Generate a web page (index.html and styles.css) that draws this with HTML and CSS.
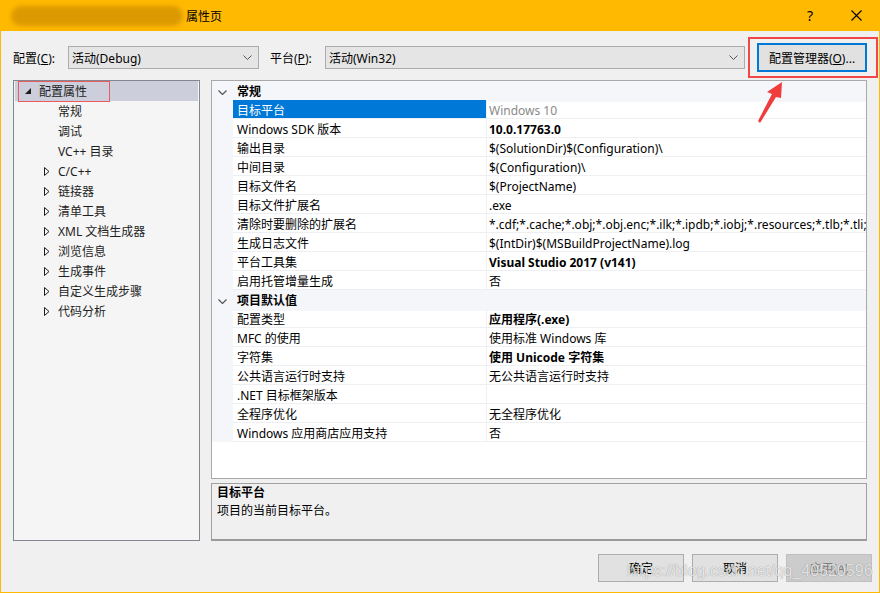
FILE: index.html
```html
<!DOCTYPE html>
<html lang="zh-CN">
<head>
<meta charset="UTF-8">
<title>属性页</title>
<link rel="stylesheet" href="styles.css">
</head>
<body>
<div class="window">
  <div class="titlebar">
    <div class="smear"></div>
    <span class="title">属性页</span>
    <span class="caption-btn help">?</span>
    <span class="caption-btn">
      <svg width="11" height="11" viewBox="0 0 11 11"><path d="M0.5 0.5 L10.5 10.5 M10.5 0.5 L0.5 10.5" stroke="#000" stroke-width="1.1"/></svg>
    </span>
  </div>

  <div class="content">
    <div class="toolbar">
      <span class="label">配置(<u>C</u>):</span>
      <div class="combo combo-config">
        <span>活动(Debug)</span>
        <svg width="9" height="5" viewBox="0 0 9 5"><polyline points="0.5,0.5 4.5,4.5 8.5,0.5" fill="none" stroke="#555" stroke-width="1"/></svg>
      </div>
      <span class="label label-platform">平台(<u>P</u>):</span>
      <div class="combo combo-platform">
        <span>活动(Win32)</span>
        <svg width="9" height="5" viewBox="0 0 9 5"><polyline points="0.5,0.5 4.5,4.5 8.5,0.5" fill="none" stroke="#555" stroke-width="1"/></svg>
      </div>
      <button class="btn-manager">配置管理器(<u>O</u>)...</button>
    </div>

    <div class="main">
      <div class="tree">
        <div class="tree-row root selected">
          <svg class="tri" width="6" height="6" viewBox="0 0 6 6"><polygon points="6,0 6,6 0,6" fill="#1e1e1e"/></svg>
          <span>配置属性</span>
          <span class="mark"></span>
        </div>
        <div class="tree-row leaf">常规</div>
        <div class="tree-row leaf">调试</div>
        <div class="tree-row leaf">VC++ 目录</div>
        <div class="tree-row node"><svg width="6" height="9" viewBox="0 0 6 9"><polygon points="0.5,0.5 5,4.5 0.5,8.5" fill="none" stroke="#1e1e1e"/></svg><span>C/C++</span></div>
        <div class="tree-row node"><svg width="6" height="9" viewBox="0 0 6 9"><polygon points="0.5,0.5 5,4.5 0.5,8.5" fill="none" stroke="#1e1e1e"/></svg><span>链接器</span></div>
        <div class="tree-row node"><svg width="6" height="9" viewBox="0 0 6 9"><polygon points="0.5,0.5 5,4.5 0.5,8.5" fill="none" stroke="#1e1e1e"/></svg><span>清单工具</span></div>
        <div class="tree-row node"><svg width="6" height="9" viewBox="0 0 6 9"><polygon points="0.5,0.5 5,4.5 0.5,8.5" fill="none" stroke="#1e1e1e"/></svg><span>XML 文档生成器</span></div>
        <div class="tree-row node"><svg width="6" height="9" viewBox="0 0 6 9"><polygon points="0.5,0.5 5,4.5 0.5,8.5" fill="none" stroke="#1e1e1e"/></svg><span>浏览信息</span></div>
        <div class="tree-row node"><svg width="6" height="9" viewBox="0 0 6 9"><polygon points="0.5,0.5 5,4.5 0.5,8.5" fill="none" stroke="#1e1e1e"/></svg><span>生成事件</span></div>
        <div class="tree-row node"><svg width="6" height="9" viewBox="0 0 6 9"><polygon points="0.5,0.5 5,4.5 0.5,8.5" fill="none" stroke="#1e1e1e"/></svg><span>自定义生成步骤</span></div>
        <div class="tree-row node"><svg width="6" height="9" viewBox="0 0 6 9"><polygon points="0.5,0.5 5,4.5 0.5,8.5" fill="none" stroke="#1e1e1e"/></svg><span>代码分析</span></div>
      </div>

      <div class="right">
        <div class="propgrid">
          <div class="pg-cat">
            <span class="pg-margin"><svg width="9" height="5" viewBox="0 0 9 5"><polyline points="0.5,0.5 4.5,4.5 8.5,0.5" fill="none" stroke="#555" stroke-width="1.2"/></svg></span>
            <span class="pg-cat-name">常规</span>
          </div>
          <div class="pg-row selected"><span class="pg-margin"></span><span class="pg-name">目标平台</span><span class="pg-value muted">Windows 10</span></div>
          <div class="pg-row"><span class="pg-margin"></span><span class="pg-name">Windows SDK 版本</span><span class="pg-value bold">10.0.17763.0</span></div>
          <div class="pg-row"><span class="pg-margin"></span><span class="pg-name">输出目录</span><span class="pg-value">$(SolutionDir)$(Configuration)\</span></div>
          <div class="pg-row"><span class="pg-margin"></span><span class="pg-name">中间目录</span><span class="pg-value">$(Configuration)\</span></div>
          <div class="pg-row"><span class="pg-margin"></span><span class="pg-name">目标文件名</span><span class="pg-value">$(ProjectName)</span></div>
          <div class="pg-row"><span class="pg-margin"></span><span class="pg-name">目标文件扩展名</span><span class="pg-value">.exe</span></div>
          <div class="pg-row"><span class="pg-margin"></span><span class="pg-name">清除时要删除的扩展名</span><span class="pg-value">*.cdf;*.cache;*.obj;*.obj.enc;*.ilk;*.ipdb;*.iobj;*.resources;*.tlb;*.tli;*.t</span></div>
          <div class="pg-row"><span class="pg-margin"></span><span class="pg-name">生成日志文件</span><span class="pg-value">$(IntDir)$(MSBuildProjectName).log</span></div>
          <div class="pg-row"><span class="pg-margin"></span><span class="pg-name">平台工具集</span><span class="pg-value bold">Visual Studio 2017 (v141)</span></div>
          <div class="pg-row"><span class="pg-margin"></span><span class="pg-name">启用托管增量生成</span><span class="pg-value">否</span></div>
          <div class="pg-cat">
            <span class="pg-margin"><svg width="9" height="5" viewBox="0 0 9 5"><polyline points="0.5,0.5 4.5,4.5 8.5,0.5" fill="none" stroke="#555" stroke-width="1.2"/></svg></span>
            <span class="pg-cat-name">项目默认值</span>
          </div>
          <div class="pg-row"><span class="pg-margin"></span><span class="pg-name">配置类型</span><span class="pg-value bold">应用程序(.exe)</span></div>
          <div class="pg-row"><span class="pg-margin"></span><span class="pg-name">MFC 的使用</span><span class="pg-value">使用标准 Windows 库</span></div>
          <div class="pg-row"><span class="pg-margin"></span><span class="pg-name">字符集</span><span class="pg-value bold">使用 Unicode 字符集</span></div>
          <div class="pg-row"><span class="pg-margin"></span><span class="pg-name">公共语言运行时支持</span><span class="pg-value">无公共语言运行时支持</span></div>
          <div class="pg-row"><span class="pg-margin"></span><span class="pg-name">.NET 目标框架版本</span><span class="pg-value"></span></div>
          <div class="pg-row"><span class="pg-margin"></span><span class="pg-name">全程序优化</span><span class="pg-value">无全程序优化</span></div>
          <div class="pg-row"><span class="pg-margin"></span><span class="pg-name">Windows 应用商店应用支持</span><span class="pg-value">否</span></div>
        </div>
        <div class="desc">
          <div class="desc-title">目标平台</div>
          <div>项目的当前目标平台。</div>
        </div>
      </div>
    </div>

    <div class="buttons">
      <button class="btn">确定</button>
      <button class="btn">取消</button>
      <button class="btn disabled">应用(A)</button>
    </div>
  </div>

  <!-- annotations on top of the screenshot -->
  <div class="frame-red"></div>
  <svg class="arrow" width="40" height="50" viewBox="0 0 40 50">
    <polygon points="31,4 16,14 21,16 7,43 9,45 25,19 30,20" fill="#f03c3c"/>
  </svg>
  <div class="watermark">https://blog.csdn.net/qq_40520596</div>
</div>
</body>
</html>
```

FILE: styles.css
```css
body {
  margin: 0;
  font-family: "Noto Sans", "Noto Sans CJK SC", sans-serif;
  font-size: 12px;
  color: #000;
}

.window {
  position: relative;
  width: 880px;
  height: 593px;
  box-sizing: border-box;
  border: 1px solid #ffb900;
  border-top: none;
  background: #f0f0f0;
  overflow: hidden;
}

/* title bar */
.titlebar {
  height: 31px;
  background: #ffb900;
  display: flex;
  align-items: center;
}

.smear {
  width: 172px;
  height: 20px;
  margin-left: 10px;
  border-radius: 10px;
  background: #dc9a00;
  filter: blur(2px);
}

.title {
  margin-left: 3px;
  flex: 1;
}

.caption-btn {
  width: 46px;
  height: 31px;
  display: flex;
  align-items: center;
  justify-content: center;
}

.help {
  font-size: 14px;
}

.content {
  padding: 0 12px;
}

/* toolbar */
.toolbar {
  height: 49px;
  padding-top: 4px;
  box-sizing: border-box;
  display: flex;
  align-items: center;
}

.label {
  width: 55px;
}

.label-platform {
  margin-left: 11px;
}

.combo {
  height: 23px;
  box-sizing: border-box;
  border: 1px solid #acacac;
  background: #e5e5e5;
  display: flex;
  align-items: center;
  justify-content: space-between;
  padding: 0 6px 0 3px;
}

.combo-config {
  width: 191px;
}

.combo-platform {
  flex: 1;
}

.btn-manager {
  margin-left: 12px;
  width: 110px;
  height: 29px;
  border: 2px solid #0078d7;
  background: #e1e1e1;
  font: inherit;
  color: #000;
  padding: 0;
}

/* main area */
.main {
  display: grid;
  grid-template-columns: 187px 656px;
  column-gap: 11px;
  height: 461px;
}

.tree {
  border: 1px solid #828790;
  background: #f5f5f5;
  padding: 0 1px;
  color: #1e1e1e;
}

.tree-row {
  height: 20px;
  display: flex;
  align-items: center;
  position: relative;
}

.tree-row.root {
  padding-left: 10px;
  gap: 8px;
}

.tree-row.selected {
  background: #cccedb;
}

.tree-row .mark {
  position: absolute;
  left: 3px;
  top: 0;
  width: 92px;
  height: 21px;
  box-sizing: border-box;
  border: 1px solid #ea5a5f;
}

.tree-row.leaf {
  padding-left: 43px;
}

.tree-row.node {
  padding-left: 29px;
  gap: 8px;
}

.right {
  display: flex;
  flex-direction: column;
  gap: 4px;
}

.propgrid {
  height: 399px;
  box-sizing: border-box;
  border: 1px solid #a9a9a9;
  background: #fff;
}

.pg-row,
.pg-cat {
  display: grid;
  grid-template-columns: 21px 254px 1fr;
  height: 19px;
}

.pg-margin {
  background: #f4f6f9;
  display: flex;
  align-items: center;
  justify-content: center;
}

.pg-cat .pg-margin {
  padding-top: 1px;
}

.pg-cat-name {
  grid-column: 2 / 4;
  background: #f4f6f9;
  font-weight: bold;
  padding-left: 4px;
  line-height: 21px;
}

.pg-name,
.pg-value {
  border-bottom: 1px solid #edeff3;
  line-height: 21px;
  white-space: nowrap;
  overflow: hidden;
}

.pg-name {
  padding-left: 4px;
  border-right: 1px solid #edeff3;
}

.pg-value {
  padding-left: 2px;
}

.pg-row.selected .pg-name {
  background: #0078d7;
  color: #fff;
}

.muted {
  color: #8a8a8a;
}

.bold {
  font-weight: bold;
}

.desc {
  flex: 1;
  border: 1px solid #a0a0a0;
  border-bottom: 2px solid #9a9a9a;
  padding: 0 5px;
  line-height: 18px;
}

.desc-title {
  font-weight: bold;
}

/* bottom buttons */
.buttons {
  margin-top: 13px;
  margin-right: -5px;
  display: flex;
  justify-content: flex-end;
  gap: 8px;
}

.btn {
  width: 86px;
  height: 28px;
  border: 1px solid #adadad;
  background: #e1e1e1;
  font: inherit;
  color: #000;
  padding: 0;
}

.btn.disabled {
  background: #cccccc;
  border-color: #bfbfbf;
  color: #838383;
}

/* annotations */
.frame-red {
  position: absolute;
  left: 747px;
  top: 37px;
  width: 130px;
  height: 41px;
  box-sizing: border-box;
  border: 2px solid #f04848;
}

.arrow {
  position: absolute;
  left: 750px;
  top: 78px;
}

.watermark {
  position: absolute;
  left: 626px;
  top: 562px;
  font-family: "Liberation Sans", sans-serif;
  font-size: 16px;
  color: rgba(255, 255, 255, 0.8);
  text-shadow: 0 0 1px rgba(0, 0, 0, 0.45);
}
```
